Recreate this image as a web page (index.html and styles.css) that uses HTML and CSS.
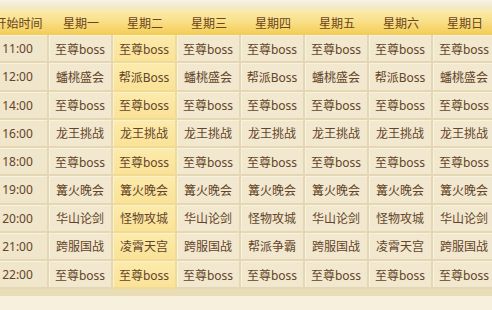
FILE: index.html
```html
<!DOCTYPE html>
<html lang="zh">
<head>
<meta charset="utf-8">
<title>活动时间表</title>
<link rel="stylesheet" href="styles.css">
</head>
<body>
<div class="screen">
  <div class="topbar"></div>
  <div class="table">
    <div class="hd">开始时间</div><div class="hd">星期一</div><div class="hd">星期二</div><div class="hd">星期三</div><div class="hd">星期四</div><div class="hd">星期五</div><div class="hd">星期六</div><div class="hd">星期日</div>

    <div class="c tm">11:00</div><div class="c">至尊boss</div><div class="c t">至尊boss</div><div class="c">至尊boss</div><div class="c">至尊boss</div><div class="c">至尊boss</div><div class="c">至尊boss</div><div class="c">至尊boss</div>

    <div class="c tm">12:00</div><div class="c">蟠桃盛会</div><div class="c t">帮派Boss</div><div class="c">蟠桃盛会</div><div class="c">帮派Boss</div><div class="c">蟠桃盛会</div><div class="c">帮派Boss</div><div class="c">蟠桃盛会</div>

    <div class="c tm">14:00</div><div class="c">至尊boss</div><div class="c t">至尊boss</div><div class="c">至尊boss</div><div class="c">至尊boss</div><div class="c">至尊boss</div><div class="c">至尊boss</div><div class="c">至尊boss</div>

    <div class="c tm">16:00</div><div class="c">龙王挑战</div><div class="c t">龙王挑战</div><div class="c">龙王挑战</div><div class="c">龙王挑战</div><div class="c">龙王挑战</div><div class="c">龙王挑战</div><div class="c">龙王挑战</div>

    <div class="c tm">18:00</div><div class="c">至尊boss</div><div class="c t">至尊boss</div><div class="c">至尊boss</div><div class="c">至尊boss</div><div class="c">至尊boss</div><div class="c">至尊boss</div><div class="c">至尊boss</div>

    <div class="c tm">19:00</div><div class="c">篝火晚会</div><div class="c t">篝火晚会</div><div class="c">篝火晚会</div><div class="c">篝火晚会</div><div class="c">篝火晚会</div><div class="c">篝火晚会</div><div class="c">篝火晚会</div>

    <div class="c tm">20:00</div><div class="c">华山论剑</div><div class="c t">怪物攻城</div><div class="c">华山论剑</div><div class="c">怪物攻城</div><div class="c">华山论剑</div><div class="c">怪物攻城</div><div class="c">华山论剑</div>

    <div class="c tm">21:00</div><div class="c">跨服国战</div><div class="c t">凌霄天宫</div><div class="c">跨服国战</div><div class="c">帮派争霸</div><div class="c">跨服国战</div><div class="c">凌霄天宫</div><div class="c">跨服国战</div>

    <div class="c tm">22:00</div><div class="c">至尊boss</div><div class="c t">至尊boss</div><div class="c">至尊boss</div><div class="c">至尊boss</div><div class="c">至尊boss</div><div class="c">至尊boss</div><div class="c">至尊boss</div>
  </div>
  <div class="foot"></div>
</div>
</body>
</html>
```
FILE: styles.css
```css
html, body {
  margin: 0;
  padding: 0;
  background: #f6efda;
}
.screen {
  width: 492px;
  height: 310px;
  overflow: hidden;
  display: flex;
  flex-direction: column;
  background: #f7f0dc;
  font-family: "Noto Sans", "Noto Sans CJK SC", sans-serif;
  font-size: 12px;
  color: #644428;
}
.topbar {
  height: 9px;
  flex: none;
  background: linear-gradient(#f8f2e0, #f1e6c6);
}
.table {
  flex: none;
  margin-left: -12px;
  display: grid;
  grid-template-columns: 61px repeat(7, 64px);
  grid-template-rows: 26px;
  grid-auto-rows: 28.25px;
}
.hd {
  display: flex;
  align-items: center;
  justify-content: center;
  white-space: nowrap;
  padding-top: 2px;
  background: linear-gradient(#fbecb0 0%, #f9e08a 45%, #f3cc55 100%);
  color: #6a4520;
}
.c {
  display: flex;
  align-items: center;
  justify-content: center;
  white-space: nowrap;
  background: #f1e8cf;
  border-right: 2px solid #e4d7b2;
  border-bottom: 2px solid #e4d7b2;
  box-shadow: inset 1px 1px 0 #f8f2df;
  padding-top: 1px;
}
.c.tm {
  background: #f0e6cb;
}
.c.t {
  background: linear-gradient(#fcebad, #fae297);
  border-right-color: #efdb96;
  border-bottom-color: #f0db94;
  box-shadow: inset 1px 1px 0 #fdf1c6;
}
.foot {
  flex: none;
  height: 7px;
  background: #e9ddb8;
}
```
